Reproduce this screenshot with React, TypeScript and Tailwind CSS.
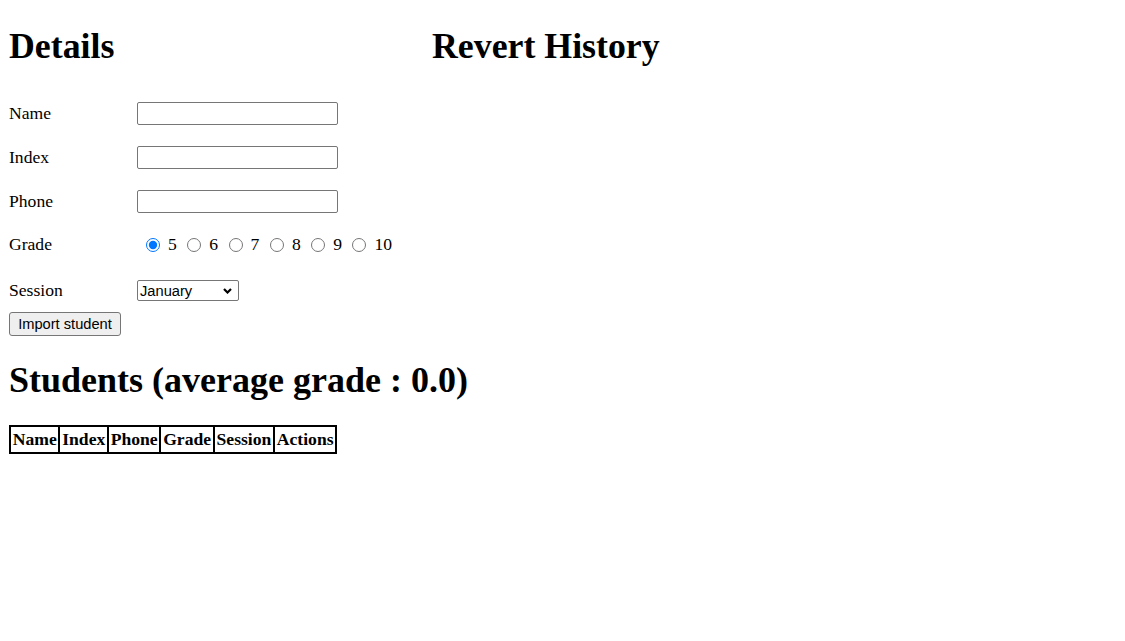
import { useState } from 'react';

const grades = ['5', '6', '7', '8', '9', '10'];
const columns = ['Name', 'Index', 'Phone', 'Grade', 'Session', 'Actions'];

function TextRow({ label }: { label: string }) {
  return (
    <div className="flex h-[23px] items-center">
      <label className="w-[128px] text-[17.6px] leading-normal">{label}</label>
      <input
        type="text"
        className="h-[23px] w-[201px] rounded-[2px] border border-[#767676] bg-white px-[2px] font-['Liberation_Sans',Arial,sans-serif] text-[14.67px] outline-none"
      />
    </div>
  );
}

export default function App() {
  const [grade, setGrade] = useState('5');

  return (
    <div className="min-h-screen bg-white pl-[9px] font-['Liberation_Serif','Times_New_Roman',serif] text-black">
      <div className="flex pt-[26px]">
        {/* Details form */}
        <div className="w-[423px] shrink-0">
          <h1 className="text-[35.8px] font-bold leading-[40px]">Details</h1>

          <div className="mt-[36px]">
            <TextRow label="Name" />
            <div className="mt-[21px]">
              <TextRow label="Index" />
            </div>
            <div className="mt-[21px]">
              <TextRow label="Phone" />
            </div>

            <div className="mt-[20px] flex h-[23px] items-center">
              <span className="w-[128px] text-[17.6px] leading-normal">Grade</span>
              <div className="flex items-center gap-[10.5px] pl-[9px]">
                {grades.map((g) => (
                  <label key={g} className="flex items-center gap-[8px]">
                    <input
                      type="radio"
                      name="grade"
                      checked={grade === g}
                      onChange={() => setGrade(g)}
                      className="m-0 h-[14px] w-[14px]"
                    />
                    <span className="text-[17.6px] leading-normal">{g}</span>
                  </label>
                ))}
              </div>
            </div>

            <div className="mt-[23px] flex h-[23px] items-center">
              <span className="w-[128px] text-[17.6px] leading-normal">Session</span>
              <div className="flex h-[21px] w-[102px] items-center justify-between rounded-[2px] border border-[#767676] bg-white pl-[2px] pr-[6px] font-['Liberation_Sans',Arial,sans-serif] text-[14.67px]">
                <span>January</span>
                <svg width="9" height="6" viewBox="0 0 9 6" fill="none">
                  <path d="M1 1l3.5 3.5L8 1" stroke="#000" strokeWidth="2.2" />
                </svg>
              </div>
            </div>

            <button className="mt-[10px] h-[24px] w-[112px] rounded-[3px] border border-[#767676] bg-[#efefef] font-['Liberation_Sans',Arial,sans-serif] text-[14.67px] text-black">
              Import student
            </button>
          </div>
        </div>

        {/* Revert history */}
        <h1 className="text-[35.8px] font-bold leading-[40px]">Revert History</h1>
      </div>

      <h1 className="mt-[24px] text-[36px] font-bold leading-[40px]">Students (average grade : 0.0)</h1>

      <table className="mt-[25px] border-collapse">
        <thead>
          <tr>
            {columns.map((c) => (
              <th key={c} className="border-2 border-black px-[1.75px] py-[3px] text-[17.6px] font-bold leading-[19px]">
                {c}
              </th>
            ))}
          </tr>
        </thead>
      </table>
    </div>
  );
}
